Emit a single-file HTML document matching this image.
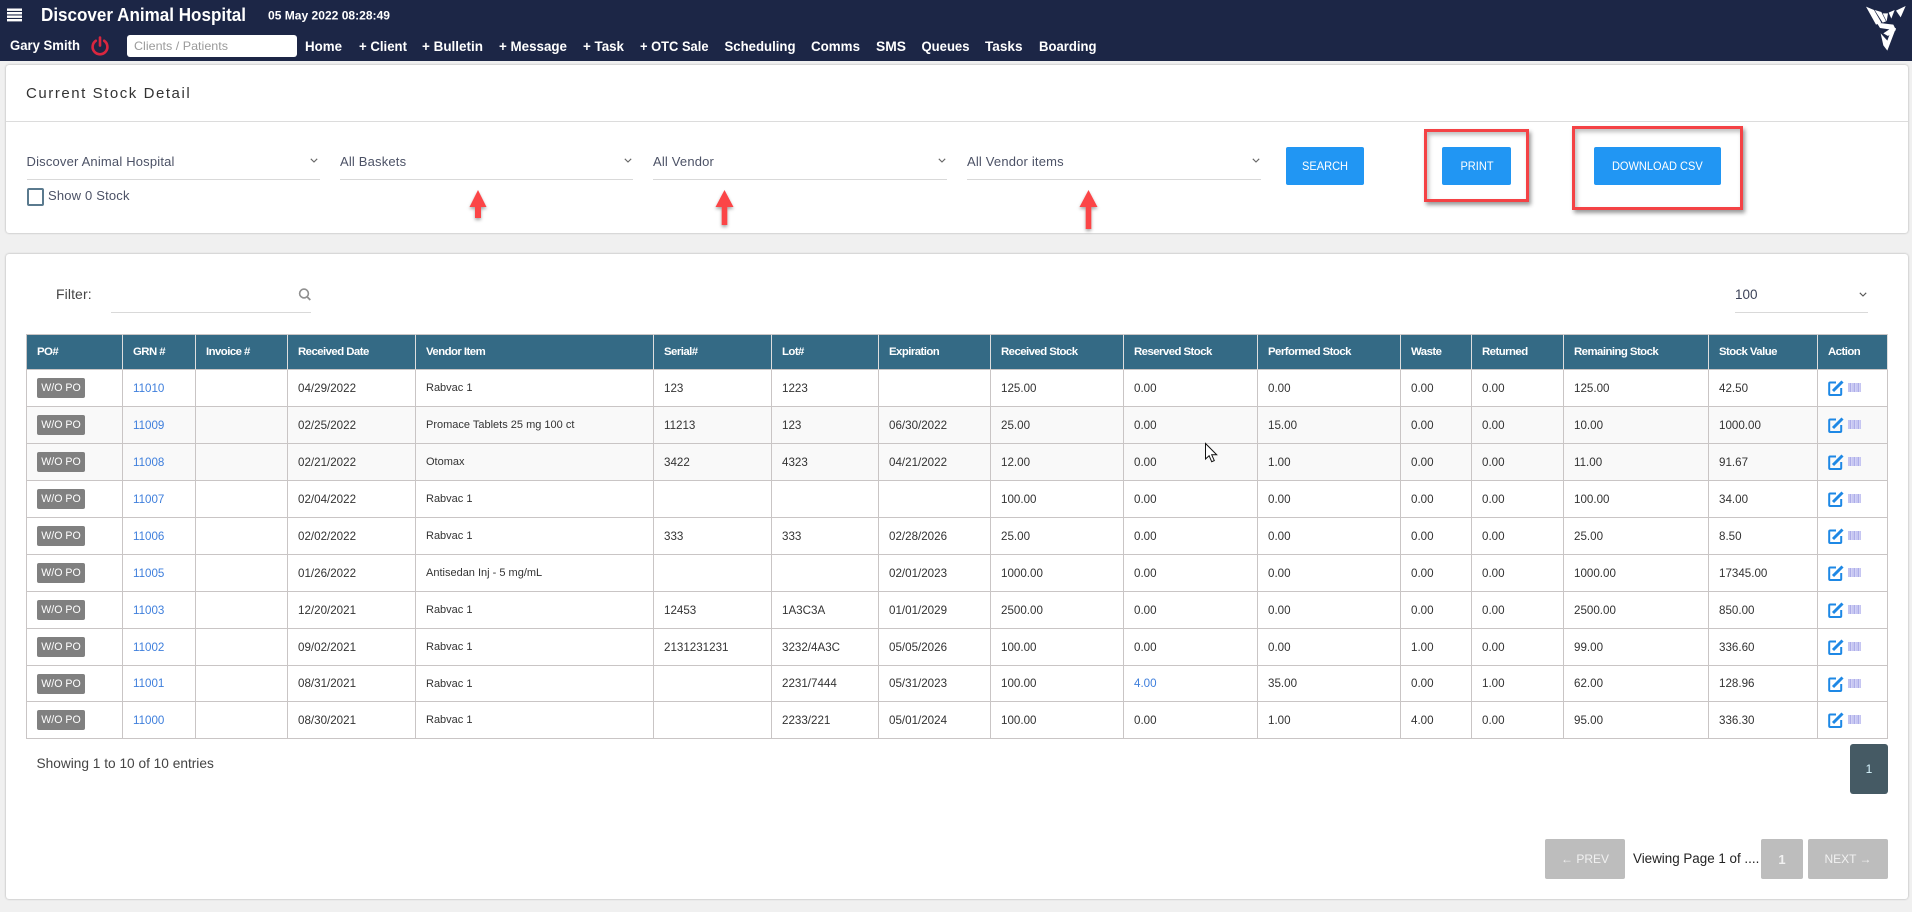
<!DOCTYPE html>
<html lang="en">
<head>
<meta charset="utf-8">
<title>Current Stock Detail</title>
<style>
*{box-sizing:border-box}
html,body{margin:0;padding:0;width:1912px;height:912px;overflow:hidden;background:#f0f0f0;font-family:"Liberation Sans",sans-serif;color:#333}
.abs,.abs-t{position:absolute}
.abs-t{white-space:nowrap;line-height:1}
#hdr{position:absolute;left:0;top:0;width:1912px;height:61px;background:#1c2646}
.panel{position:absolute;left:6px;width:1902px;background:#fff;border-radius:3px;box-shadow:0 0 2px rgba(0,0,0,.3)}
.sel-line{position:absolute;height:1px;background:#d9d9d9}
.sel-text{position:absolute;font-size:13px;color:#4c5266;white-space:nowrap;line-height:16px;letter-spacing:.18px}
.chev{position:absolute;width:8px;height:5px}
.btn{position:absolute;background:#2196f3;color:#fff;border-radius:2px;font-size:12px;display:flex;align-items:center;justify-content:center;top:147px;height:38px}
.btn span{display:inline-block;transform:scaleX(.92)}
.redbox{position:absolute;border:3px solid #f44245;box-shadow:2px 3px 4px rgba(0,0,0,.4),inset 2px 3px 4px rgba(0,0,0,.25)}
table{position:absolute;left:26px;top:334px;width:1862px;table-layout:fixed;border-collapse:separate;border-spacing:0;font-size:11.6px;color:#333}
th{background:#346a85;color:#fff;font-size:11.4px;font-weight:bold;text-align:left;height:36px;padding:0 0 1px 10px;border-top:1px solid #c9c5c5;border-right:1px solid #dedede;border-bottom:1px solid #c9c5c5;letter-spacing:-.55px;white-space:nowrap}
th:first-child{border-left:1px solid #c9c5c5;padding-left:10px}
td{height:37px;padding:0 0 0 10px;border-right:1px solid #c9c5c5;border-bottom:1px solid #c9c5c5;white-space:nowrap}
td:first-child{border-left:1px solid #c9c5c5}
tr.s td{height:36px}
tr.g td{background:#f9f9f9}
.b{display:block;width:48px;height:20px;background:#808080;color:#fff;border-radius:2px;font-size:10.6px;line-height:20px;text-align:center}
.l{color:#3f7fdc}
.v{font-size:11px}
.ic{display:flex;align-items:flex-start;position:relative;height:16px}
.bc{display:block;width:13px;height:9px;margin:3px 0 0 4px;background:repeating-linear-gradient(90deg,#c6c6f2 0 2px,#adade8 2px 3px,#d2d2f5 3px 4px)}
.pg{position:absolute;background:#bdbdbd;color:#f1f1f1;border-radius:2px;top:839px;height:40px;display:flex;align-items:center;justify-content:center;font-size:12px}
</style>
</head>
<body>

<div id="hdr"></div>
<svg class="abs" style="left:0;top:0" width="1912" height="61" viewBox="0 0 1912 61" font-family="'Liberation Sans',sans-serif" font-weight="bold" fill="#fff">
  <g fill="#fff">
    <rect x="7" y="8.5" width="15" height="2.4"/>
    <rect x="7" y="12" width="15" height="2.4"/>
    <rect x="7" y="15.5" width="15" height="2.4"/>
    <rect x="7" y="19" width="15" height="2.4"/>
  </g>
  <text x="41" y="21" font-size="18" textLength="205" lengthAdjust="spacingAndGlyphs">Discover Animal Hospital</text>
  <text x="268" y="19.5" font-size="12" textLength="122" lengthAdjust="spacingAndGlyphs">05 May 2022 08:28:49</text>
  <text x="10" y="50" font-size="13.5" textLength="70" lengthAdjust="spacingAndGlyphs">Gary Smith</text>
  <g fill="none" stroke="#d9263f" stroke-width="2.6" stroke-linecap="round">
    <path d="M95.8 40.8a7.4 7.4 0 1 0 8.4 0"/>
    <path d="M100 37.5v8"/>
  </g>
  <rect x="127" y="35" width="170" height="22" rx="3" fill="#fff"/>
  <text x="134" y="50" font-size="12" font-weight="normal" fill="#9a9a9a" textLength="94" lengthAdjust="spacingAndGlyphs">Clients / Patients</text>
  <g font-size="13.5">
    <text x="305" y="51" textLength="37" lengthAdjust="spacingAndGlyphs">Home</text>
    <text x="359" y="51" textLength="48" lengthAdjust="spacingAndGlyphs">+ Client</text>
    <text x="422" y="51" textLength="61" lengthAdjust="spacingAndGlyphs">+ Bulletin</text>
    <text x="499" y="51" textLength="68" lengthAdjust="spacingAndGlyphs">+ Message</text>
    <text x="583" y="51" textLength="41" lengthAdjust="spacingAndGlyphs">+ Task</text>
    <text x="640" y="51" textLength="68.5" lengthAdjust="spacingAndGlyphs">+ OTC Sale</text>
    <text x="724.5" y="51" textLength="71" lengthAdjust="spacingAndGlyphs">Scheduling</text>
    <text x="811" y="51" textLength="49" lengthAdjust="spacingAndGlyphs">Comms</text>
    <text x="876" y="51" textLength="30" lengthAdjust="spacingAndGlyphs">SMS</text>
    <text x="921.5" y="51" textLength="48" lengthAdjust="spacingAndGlyphs">Queues</text>
    <text x="985" y="51" textLength="37.5" lengthAdjust="spacingAndGlyphs">Tasks</text>
    <text x="1039" y="51" textLength="57.5" lengthAdjust="spacingAndGlyphs">Boarding</text>
  </g>
  <g transform="translate(1850 0) scale(.3333)" fill="#fff">
    <polygon points="48,20 72,30 94,68 78,74"/>
    <polygon points="74,30 94,36 108,64 98,68"/>
    <polygon points="98,40 114,40 110,64"/>
    <polygon points="116,38 134,30 124,56"/>
    <polygon points="138,32 167,18 152,52"/>
    <polygon points="80,68 130,74 138,90 114,108 100,100 118,88 90,84"/>
    <polygon points="92,100 112,122 126,84 138,84 112,152 100,136"/>
  </g>
</svg>

<!-- Top panel -->
<div class="panel" style="top:65px;height:168px"></div>
<div class="abs" style="left:6px;top:121px;width:1902px;height:1px;background:#dcdcdc"></div>
<div class="abs-t" style="left:26px;top:85.5px;font-size:15px;letter-spacing:1.55px;color:#333">Current Stock Detail</div>

<div class="sel-text" style="left:26.5px;top:154px">Discover Animal Hospital</div>
<div class="sel-line" style="left:26.5px;top:179px;width:293.5px"></div>
<svg class="chev" style="left:310px;top:158px" viewBox="0 0 8 5"><path d="M.8.8L4 4 7.2.8" fill="none" stroke="#666" stroke-width="1.1"/></svg>

<div class="sel-text" style="left:340px;top:154px">All Baskets</div>
<div class="sel-line" style="left:340px;top:179px;width:293px"></div>
<svg class="chev" style="left:624px;top:158px" viewBox="0 0 8 5"><path d="M.8.8L4 4 7.2.8" fill="none" stroke="#666" stroke-width="1.1"/></svg>

<div class="sel-text" style="left:653px;top:154px">All Vendor</div>
<div class="sel-line" style="left:653px;top:179px;width:294px"></div>
<svg class="chev" style="left:938px;top:158px" viewBox="0 0 8 5"><path d="M.8.8L4 4 7.2.8" fill="none" stroke="#666" stroke-width="1.1"/></svg>

<div class="sel-text" style="left:967px;top:154px">All Vendor items</div>
<div class="sel-line" style="left:967px;top:179px;width:294px"></div>
<svg class="chev" style="left:1252px;top:158px" viewBox="0 0 8 5"><path d="M.8.8L4 4 7.2.8" fill="none" stroke="#666" stroke-width="1.1"/></svg>

<div class="abs" style="left:26.5px;top:188px;width:17.5px;height:18px;border:2px solid #5a7a8e;border-radius:2px;background:#fff"></div>
<div class="sel-text" style="left:48px;top:188px">Show 0 Stock</div>

<div class="btn" style="left:1286px;width:78px"><span>SEARCH</span></div>
<div class="btn" style="left:1442px;width:69px"><span>PRINT</span></div>
<div class="btn" style="left:1594px;width:127px"><span>DOWNLOAD CSV</span></div>
<div class="redbox" style="left:1424px;top:129px;width:105px;height:73px"></div>
<div class="redbox" style="left:1572px;top:126px;width:171px;height:84px"></div>

<svg class="abs" style="left:0;top:180px;overflow:visible" width="1200" height="60" viewBox="0 180 1200 60">
  <defs><filter id="sh" x="-50%" y="-20%" width="200%" height="150%"><feDropShadow dx="0" dy="2" stdDeviation="1.5" flood-color="#000" flood-opacity=".35"/></filter></defs>
  <g fill="#fb4446" filter="url(#sh)">
    <polygon points="478,190 486.5,207 481,207 481,218 475,218 475,207 469.5,207"/>
    <polygon points="724.5,190 733.5,207 727.3,207 727.3,225 721.7,225 721.7,207 715.5,207"/>
    <polygon points="1088.5,190 1097.5,207 1091.3,207 1091.3,229 1085.7,229 1085.7,207 1079.5,207"/>
  </g>
</svg>

<!-- Main panel -->
<div class="panel" style="top:254px;height:645px"></div>
<div class="abs-t" style="left:56px;top:287px;font-size:14px;letter-spacing:.1px;color:#444">Filter:</div>
<div class="sel-line" style="left:111px;top:312px;width:200px"></div>
<svg class="abs" style="left:298px;top:288px" width="14" height="13" viewBox="0 0 14 13"><circle cx="6" cy="5.5" r="4.4" fill="none" stroke="#8f8f8f" stroke-width="1.6"/><path d="M9.3 9l3 3" stroke="#8f8f8f" stroke-width="1.8"/></svg>
<div class="abs-t" style="left:1735px;top:288px;font-size:13.5px;color:#3c4258">100</div>
<div class="sel-line" style="left:1735px;top:312px;width:133px"></div>
<svg class="chev" style="left:1859px;top:292px" viewBox="0 0 8 5"><path d="M.8.8L4 4 7.2.8" fill="none" stroke="#555" stroke-width="1.1"/></svg>

<table>
<colgroup>
<col style="width:97px"><col style="width:73px"><col style="width:92px"><col style="width:128px"><col style="width:238px"><col style="width:118px"><col style="width:107px"><col style="width:112px"><col style="width:133px"><col style="width:134px"><col style="width:143px"><col style="width:71px"><col style="width:92px"><col style="width:145px"><col style="width:109px"><col style="width:70px">
</colgroup>
<thead><tr><th>PO#</th><th>GRN #</th><th>Invoice #</th><th>Received Date</th><th>Vendor Item</th><th>Serial#</th><th>Lot#</th><th>Expiration</th><th>Received Stock</th><th>Reserved Stock</th><th>Performed Stock</th><th>Waste</th><th>Returned</th><th>Remaining Stock</th><th>Stock Value</th><th>Action</th></tr></thead>
<tbody>
<tr><td><span class="b">W/O PO</span></td><td class="l">11010</td><td></td><td>04/29/2022</td><td class="v">Rabvac 1</td><td>123</td><td>1223</td><td></td><td>125.00</td><td>0.00</td><td>0.00</td><td>0.00</td><td>0.00</td><td>125.00</td><td>42.50</td><td><div class="ic"><svg width="16" height="16" viewBox="0 0 16 16"><path d="M8 2.5H2.2a1 1 0 0 0-1 1V14a1 1 0 0 0 1 1h10a1 1 0 0 0 1-1V8" fill="none" stroke="#1e88e5" stroke-width="2"/><path d="M5 11L14.5 1.5" stroke="#1e88e5" stroke-width="3"/></svg><span class="bc"></span></div></td></tr>
<tr class="g"><td><span class="b">W/O PO</span></td><td class="l">11009</td><td></td><td>02/25/2022</td><td class="v">Promace Tablets 25 mg 100 ct</td><td>11213</td><td>123</td><td>06/30/2022</td><td>25.00</td><td>0.00</td><td>15.00</td><td>0.00</td><td>0.00</td><td>10.00</td><td>1000.00</td><td><div class="ic"><svg width="16" height="16" viewBox="0 0 16 16"><path d="M8 2.5H2.2a1 1 0 0 0-1 1V14a1 1 0 0 0 1 1h10a1 1 0 0 0 1-1V8" fill="none" stroke="#1e88e5" stroke-width="2"/><path d="M5 11L14.5 1.5" stroke="#1e88e5" stroke-width="3"/></svg><span class="bc"></span></div></td></tr>
<tr class="g"><td><span class="b">W/O PO</span></td><td class="l">11008</td><td></td><td>02/21/2022</td><td class="v">Otomax</td><td>3422</td><td>4323</td><td>04/21/2022</td><td>12.00</td><td>0.00</td><td>1.00</td><td>0.00</td><td>0.00</td><td>11.00</td><td>91.67</td><td><div class="ic"><svg width="16" height="16" viewBox="0 0 16 16"><path d="M8 2.5H2.2a1 1 0 0 0-1 1V14a1 1 0 0 0 1 1h10a1 1 0 0 0 1-1V8" fill="none" stroke="#1e88e5" stroke-width="2"/><path d="M5 11L14.5 1.5" stroke="#1e88e5" stroke-width="3"/></svg><span class="bc"></span></div></td></tr>
<tr><td><span class="b">W/O PO</span></td><td class="l">11007</td><td></td><td>02/04/2022</td><td class="v">Rabvac 1</td><td></td><td></td><td></td><td>100.00</td><td>0.00</td><td>0.00</td><td>0.00</td><td>0.00</td><td>100.00</td><td>34.00</td><td><div class="ic"><svg width="16" height="16" viewBox="0 0 16 16"><path d="M8 2.5H2.2a1 1 0 0 0-1 1V14a1 1 0 0 0 1 1h10a1 1 0 0 0 1-1V8" fill="none" stroke="#1e88e5" stroke-width="2"/><path d="M5 11L14.5 1.5" stroke="#1e88e5" stroke-width="3"/></svg><span class="bc"></span></div></td></tr>
<tr><td><span class="b">W/O PO</span></td><td class="l">11006</td><td></td><td>02/02/2022</td><td class="v">Rabvac 1</td><td>333</td><td>333</td><td>02/28/2026</td><td>25.00</td><td>0.00</td><td>0.00</td><td>0.00</td><td>0.00</td><td>25.00</td><td>8.50</td><td><div class="ic"><svg width="16" height="16" viewBox="0 0 16 16"><path d="M8 2.5H2.2a1 1 0 0 0-1 1V14a1 1 0 0 0 1 1h10a1 1 0 0 0 1-1V8" fill="none" stroke="#1e88e5" stroke-width="2"/><path d="M5 11L14.5 1.5" stroke="#1e88e5" stroke-width="3"/></svg><span class="bc"></span></div></td></tr>
<tr><td><span class="b">W/O PO</span></td><td class="l">11005</td><td></td><td>01/26/2022</td><td class="v">Antisedan Inj - 5 mg/mL</td><td></td><td></td><td>02/01/2023</td><td>1000.00</td><td>0.00</td><td>0.00</td><td>0.00</td><td>0.00</td><td>1000.00</td><td>17345.00</td><td><div class="ic"><svg width="16" height="16" viewBox="0 0 16 16"><path d="M8 2.5H2.2a1 1 0 0 0-1 1V14a1 1 0 0 0 1 1h10a1 1 0 0 0 1-1V8" fill="none" stroke="#1e88e5" stroke-width="2"/><path d="M5 11L14.5 1.5" stroke="#1e88e5" stroke-width="3"/></svg><span class="bc"></span></div></td></tr>
<tr><td><span class="b">W/O PO</span></td><td class="l">11003</td><td></td><td>12/20/2021</td><td class="v">Rabvac 1</td><td>12453</td><td>1A3C3A</td><td>01/01/2029</td><td>2500.00</td><td>0.00</td><td>0.00</td><td>0.00</td><td>0.00</td><td>2500.00</td><td>850.00</td><td><div class="ic"><svg width="16" height="16" viewBox="0 0 16 16"><path d="M8 2.5H2.2a1 1 0 0 0-1 1V14a1 1 0 0 0 1 1h10a1 1 0 0 0 1-1V8" fill="none" stroke="#1e88e5" stroke-width="2"/><path d="M5 11L14.5 1.5" stroke="#1e88e5" stroke-width="3"/></svg><span class="bc"></span></div></td></tr>
<tr><td><span class="b">W/O PO</span></td><td class="l">11002</td><td></td><td>09/02/2021</td><td class="v">Rabvac 1</td><td>2131231231</td><td>3232/4A3C</td><td>05/05/2026</td><td>100.00</td><td>0.00</td><td>0.00</td><td>1.00</td><td>0.00</td><td>99.00</td><td>336.60</td><td><div class="ic"><svg width="16" height="16" viewBox="0 0 16 16"><path d="M8 2.5H2.2a1 1 0 0 0-1 1V14a1 1 0 0 0 1 1h10a1 1 0 0 0 1-1V8" fill="none" stroke="#1e88e5" stroke-width="2"/><path d="M5 11L14.5 1.5" stroke="#1e88e5" stroke-width="3"/></svg><span class="bc"></span></div></td></tr>
<tr class="s"><td><span class="b">W/O PO</span></td><td class="l">11001</td><td></td><td>08/31/2021</td><td class="v">Rabvac 1</td><td></td><td>2231/7444</td><td>05/31/2023</td><td>100.00</td><td class="l">4.00</td><td>35.00</td><td>0.00</td><td>1.00</td><td>62.00</td><td>128.96</td><td><div class="ic"><svg width="16" height="16" viewBox="0 0 16 16"><path d="M8 2.5H2.2a1 1 0 0 0-1 1V14a1 1 0 0 0 1 1h10a1 1 0 0 0 1-1V8" fill="none" stroke="#1e88e5" stroke-width="2"/><path d="M5 11L14.5 1.5" stroke="#1e88e5" stroke-width="3"/></svg><span class="bc"></span></div></td></tr>
<tr><td><span class="b">W/O PO</span></td><td class="l">11000</td><td></td><td>08/30/2021</td><td class="v">Rabvac 1</td><td></td><td>2233/221</td><td>05/01/2024</td><td>100.00</td><td>0.00</td><td>1.00</td><td>4.00</td><td>0.00</td><td>95.00</td><td>336.30</td><td><div class="ic"><svg width="16" height="16" viewBox="0 0 16 16"><path d="M8 2.5H2.2a1 1 0 0 0-1 1V14a1 1 0 0 0 1 1h10a1 1 0 0 0 1-1V8" fill="none" stroke="#1e88e5" stroke-width="2"/><path d="M5 11L14.5 1.5" stroke="#1e88e5" stroke-width="3"/></svg><span class="bc"></span></div></td></tr>
</tbody>
</table>

<div class="abs-t" style="left:36.5px;top:757px;font-size:13.7px;color:#444">Showing 1 to 10 of 10 entries</div>
<div class="abs" style="left:1850px;top:744px;width:38px;height:50px;background:#455a64;border-radius:3px;color:#d8f6ff;font-size:12px;display:flex;align-items:center;justify-content:center">1</div>

<div class="pg" style="left:1545px;width:80px">← PREV</div>
<div class="abs-t" style="left:1633px;top:852px;font-size:13.4px;color:#222">Viewing Page 1 of ....</div>
<div class="pg" style="left:1761px;width:42px;font-weight:bold;font-size:13px">1</div>
<div class="pg" style="left:1808px;width:80px">NEXT →</div>

<svg class="abs" style="left:1204px;top:442px" width="16" height="22" viewBox="0 0 16 22"><path d="M1.5 1.5V17l3.6-3.3 2.6 6 2.6-1.1-2.6-5.8h5z" fill="#fff" stroke="#111" stroke-width="1"/></svg>

</body>
</html>
